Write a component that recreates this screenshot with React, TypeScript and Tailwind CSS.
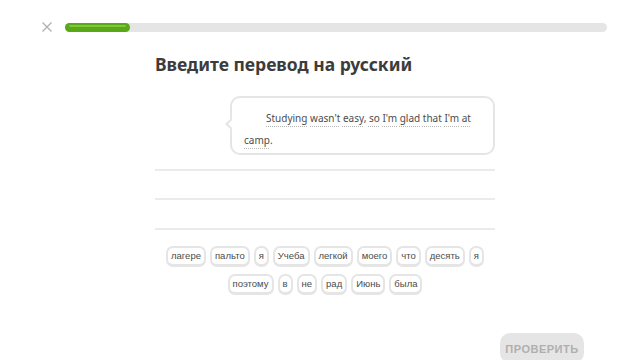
import React from "react";

const row1 = ["лагере", "пальто", "я", "Учеба", "легкой", "моего", "что", "десять", "я"];
const row2 = ["поэтому", "в", "не", "рад", "Июнь", "была"];

const sentence = ["Studying", "wasn't", "easy,", "so", "I'm", "glad", "that", "I'm", "at"];

function Chip({ word }: { word: string }) {
  return (
    <span className="h-[21px] flex items-center px-[3px] rounded-[7px] border-2 border-b-[3px] border-[#e5e5e5] bg-white text-[9.5px] text-[#4b4b4b] font-['Liberation_Sans',sans-serif]">
      {word}
    </span>
  );
}

function Token({ text }: { text: string }) {
  const m = text.match(/^(.*?)([,.]?)$/);
  const word = m ? m[1] : text;
  const punct = m ? m[2] : "";
  return (
    <>
      <span className="underline decoration-dotted decoration-[#b5b5b5] underline-offset-[4px]">{word}</span>
      {punct}
    </>
  );
}

export default function App() {
  return (
    <div className="w-[640px] h-[360px] overflow-hidden bg-white flex flex-col font-['Noto_Sans',sans-serif]">
      <div className="h-px bg-[#a9c5ca]" />

      {/* Header */}
      <div className="flex items-center pl-[42px] pr-[33px] pt-[22px]">
        <svg width="10" height="10" viewBox="0 0 10 10" className="shrink-0">
          <path d="M0.5 0.5 L9.5 9.5 M9.5 0.5 L0.5 9.5" stroke="#afafaf" strokeWidth="1.3" />
        </svg>
        <div className="ml-[13px] flex-1 h-[9px] rounded-full bg-[#e5e5e5]">
          <div className="w-[65px] h-full rounded-full bg-[#58a818] pt-[2px] px-[4px]">
            <div className="h-[2px] rounded-full bg-[#7cc93e]" />
          </div>
        </div>
      </div>

      {/* Content */}
      <div className="pl-[155px] w-[495px] pt-[20px]">
        <h1 className="text-[17.5px] leading-[24px] font-bold text-[#3c3c3c]">Введите перевод на русский</h1>

        <div className="flex justify-end mt-[20px]">
          <div className="relative w-[265px] h-[59px] rounded-[10px] border-2 border-[#e5e5e5] px-[12px] pt-[9px] text-[10px] leading-[22px] text-[#4b4b4b]">
            <span className="absolute -left-[5px] top-[22px] w-[8px] h-[8px] rotate-45 bg-white border-l-2 border-b-2 border-[#e5e5e5]" />
            <div>
              <span className="inline-block w-[22px]" />
              {sentence.map((w, i) => (
                <React.Fragment key={i}>
                  <Token text={w} />{" "}
                </React.Fragment>
              ))}
              <Token text="camp." />
            </div>
          </div>
        </div>

        <div className="mt-[14px] flex flex-col">
          <div className="h-[2px] bg-[#ebebeb]" />
          <div className="h-[27px]" />
          <div className="h-[2px] bg-[#ebebeb]" />
          <div className="h-[28px]" />
          <div className="h-[2px] bg-[#ebebeb]" />
        </div>

        <div className="mt-[16px] flex flex-col items-center gap-[7px]">
          <div className="flex gap-[4px]">
            {row1.map((w, i) => <Chip key={i} word={w} />)}
          </div>
          <div className="flex gap-[4px]">
            {row2.map((w, i) => <Chip key={i} word={w} />)}
          </div>
        </div>
      </div>

      {/* Footer */}
      <div className="mt-[10px] h-[2px] bg-[#e5e5e5]" />
      <div className="flex justify-end pr-[56px] pt-[28px]">
        <button className="w-[84px] h-[30px] rounded-[10px] bg-[#e5e5e5] pt-[2px] text-[11px] font-bold tracking-[0.5px] text-[#afafaf] font-['Liberation_Sans',sans-serif]">
          ПРОВЕРИТЬ
        </button>
      </div>
    </div>
  );
}
